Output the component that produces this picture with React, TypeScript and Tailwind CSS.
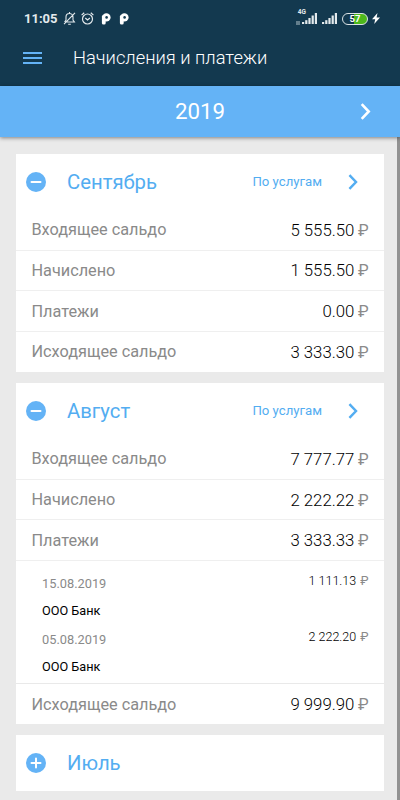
import type { ReactNode } from 'react';

interface Payment {
  date: string;
  amount: string;
  payer: string;
}

interface Month {
  name: string;
  opening: string;
  charged: string;
  paid: string;
  closing: string;
  payments?: Payment[];
}

const months: Month[] = [
  {
    name: 'Сентябрь',
    opening: '5 555.50',
    charged: '1 555.50',
    paid: '0.00',
    closing: '3 333.30',
  },
  {
    name: 'Август',
    opening: '7 777.77',
    charged: '2 222.22',
    paid: '3 333.33',
    closing: '9 999.90',
    payments: [
      { date: '15.08.2019', amount: '1 111.13', payer: 'ООО Банк' },
      { date: '05.08.2019', amount: '2 222.20', payer: 'ООО Банк' },
    ],
  },
];

function Chevron({ className }: { className: string }) {
  return (
    <svg viewBox="0 0 10 17" fill="none" stroke="currentColor" className={className}>
      <path d="M1.2 1.2 8.2 8.5 1.2 15.8" strokeWidth="2.6" />
    </svg>
  );
}

function ToggleIcon({ open }: { open: boolean }) {
  return (
    <svg viewBox="0 0 20 20" className="h-5 w-5 shrink-0">
      <circle cx="10" cy="10" r="10" fill="#64b3f6" />
      <path
        d={open ? 'M5.5 10h9' : 'M5.5 10h9M10 5.5v9'}
        stroke="#fff"
        strokeWidth="2"
        strokeLinecap="round"
      />
    </svg>
  );
}

function Signal() {
  return (
    <svg viewBox="0 0 15 11" fill="#e4eaed" className="h-[11px] w-[15px]">
      <rect x="0" y="9" width="2.2" height="2" />
      <rect x="3.2" y="7.2" width="2.2" height="3.8" />
      <rect x="6.4" y="5" width="2.2" height="6" />
      <rect x="9.6" y="2.5" width="2.2" height="8.5" />
      <rect x="12.8" y="0" width="2.2" height="11" />
    </svg>
  );
}

// Round app badge with a small keyhole and a short stem
function ParkingIcon() {
  return (
    <svg viewBox="0 0 10 12" className="h-3 w-2.5">
      <circle cx="5.4" cy="4.4" r="4.2" fill="#fff" />
      <rect x="0.9" y="2" width="3.8" height="9.6" rx="1.6" fill="#fff" />
      <circle cx="5.6" cy="4.4" r="1.3" fill="#13394f" />
    </svg>
  );
}

function StatusBar() {
  return (
    <div className="flex h-9 items-center pl-6 pr-5 pt-px text-[#e4eaed]">
      <span className="w-[34px] text-[13px] font-bold">11:05</span>
      <svg
        viewBox="0 0 13 13"
        fill="none"
        stroke="currentColor"
        strokeWidth="1.1"
        className="ml-[5px] h-[13px] w-[13px]"
      >
        <path d="M2 10h9.4L10 8V5a3.5 3.5 0 0 0-7 0v3L1.6 10M5.2 12.2h2.6M12 .8 1 12.2M6.5 0v1.5" />
      </svg>
      <svg
        viewBox="0 0 13 13"
        fill="none"
        stroke="currentColor"
        strokeWidth="1.2"
        className="ml-[5px] h-[13px] w-[13px]"
      >
        <circle cx="6.5" cy="7" r="5" />
        <path d="m.6 3.1 2.6-2.4M12.4 3.1 9.8.7M4.3 6l2.2 2 2.4-2" />
      </svg>
      <div className="ml-[7px] flex gap-2">
        <ParkingIcon />
        <ParkingIcon />
      </div>
      <div className="ml-auto flex items-center">
        <div className="flex h-3.5 flex-col justify-between pb-px">
          <span className="-mt-1 pl-0.5 text-[6.5px] leading-[8px] font-bold">4G</span>
          <span className="h-1 w-1 bg-[#637e8c]" />
        </div>
        <div className="-ml-1">
          <Signal />
        </div>
        <div className="ml-[5px]">
          <Signal />
        </div>
        <div className="ml-[5px] flex h-3 w-[26px] items-center justify-center rounded-full border-[1.5px] border-[#dce4e7] bg-linear-to-r from-[#13394f] from-45% to-[#4db81c] to-45% text-[9.5px] font-bold leading-none text-white">
          57
        </div>
        <svg viewBox="0 0 8 11" fill="#fff" className="ml-1 h-[11px] w-2">
          <path d="M5.5 0 0 6.3h3.2L2.2 11 8 4.6H4.6z" />
        </svg>
      </div>
    </div>
  );
}

function Row({ label, amount, last }: { label: string; amount: string; last?: boolean }) {
  return (
    <div
      className={`flex items-center justify-between pl-[15.5px] pr-[15.5px] pt-px ${
        last ? 'h-[40px]' : 'h-[40.7px] border-b border-[#efefef]'
      }`}
    >
      <span className="text-[16.25px] text-[#8a8a8a]">{label}</span>
      <span className="flex items-baseline gap-[3.5px]">
        <span className="text-[16.8px] font-light text-black">{amount}</span>
        <span className="text-[16px] text-[#8a8a8a]">₽</span>
      </span>
    </div>
  );
}

function MonthHeader({ name, open, children }: { name: string; open: boolean; children?: ReactNode }) {
  return (
    <div className="flex h-14 items-center pl-2.5 pr-[26px]">
      <ToggleIcon open={open} />
      <span className="ml-[21px] text-[20.3px] text-[#53adf1]">{name}</span>
      {children}
    </div>
  );
}

function MonthCard({ month }: { month: Month }) {
  return (
    <section className="bg-white">
      <MonthHeader name={month.name} open>
        <span className="ml-auto text-[13.2px] text-[#53adf1]">По услугам</span>
        <Chevron className="ml-[26px] h-4 w-2.5 text-[#53adf1]" />
      </MonthHeader>
      <Row label="Входящее сальдо" amount={month.opening} />
      <Row label="Начислено" amount={month.charged} />
      <Row label="Платежи" amount={month.paid} />
      {month.payments && (
        <div className="h-[123.3px] border-b border-[#e9e9e9] pt-1.5">
          {month.payments.map((payment) => (
            <div key={payment.date} className="h-14 pl-[26px] pr-[15.5px]">
              <div className="flex h-7 items-center justify-between">
                <span className="pt-1 text-[12.8px] text-[#8a8a8a]">{payment.date}</span>
                <span className="flex items-baseline gap-1 pt-px text-[12.5px]">
                  <span className="font-light text-black">{payment.amount}</span>
                  <span className="text-[#8a8a8a]">₽</span>
                </span>
              </div>
              <div className="flex h-7 items-center pt-0.5 text-[12.7px] text-black">
                {payment.payer}
              </div>
            </div>
          ))}
        </div>
      )}
      <Row label="Исходящее сальдо" amount={month.closing} last />
    </section>
  );
}

export default function App() {
  return (
    <div className="flex h-[800px] w-[400px] flex-col overflow-hidden bg-[#eaeaea] font-['Roboto',sans-serif]">
      <header className="h-[86px] shrink-0 bg-[#13394f]">
        <StatusBar />
        <div className="flex h-11 items-center pl-[23px]">
          <div className="flex w-[19px] flex-col gap-[3px]">
            <span className="h-0.5 bg-[#64b3f6]" />
            <span className="h-0.5 bg-[#64b3f6]" />
            <span className="h-0.5 bg-[#64b3f6]" />
          </div>
          <h1 className="ml-[31px] text-[18.35px] font-light text-white">Начисления и платежи</h1>
        </div>
      </header>

      {/* Year switcher */}
      <div className="z-10 flex h-[51px] shrink-0 items-center bg-[#64b3f6] pr-[29px] text-white shadow-[0_1px_4px_rgba(0,0,0,0.45)]">
        <span className="flex-1 pl-10 text-center text-[22.3px]">2019</span>
        <Chevron className="h-[17px] w-[11px] shrink-0" />
      </div>

      <div className="flex flex-1 justify-between">
        <main className="ml-4 flex w-[368px] flex-col gap-[11px] pt-[17px]">
          {months.map((month) => (
            <MonthCard key={month.name} month={month} />
          ))}
          <section className="bg-white">
            <MonthHeader name="Июль" open={false} />
          </section>
        </main>
        <div className="w-[3.5px] bg-[#929292]" />
      </div>
    </div>
  );
}
